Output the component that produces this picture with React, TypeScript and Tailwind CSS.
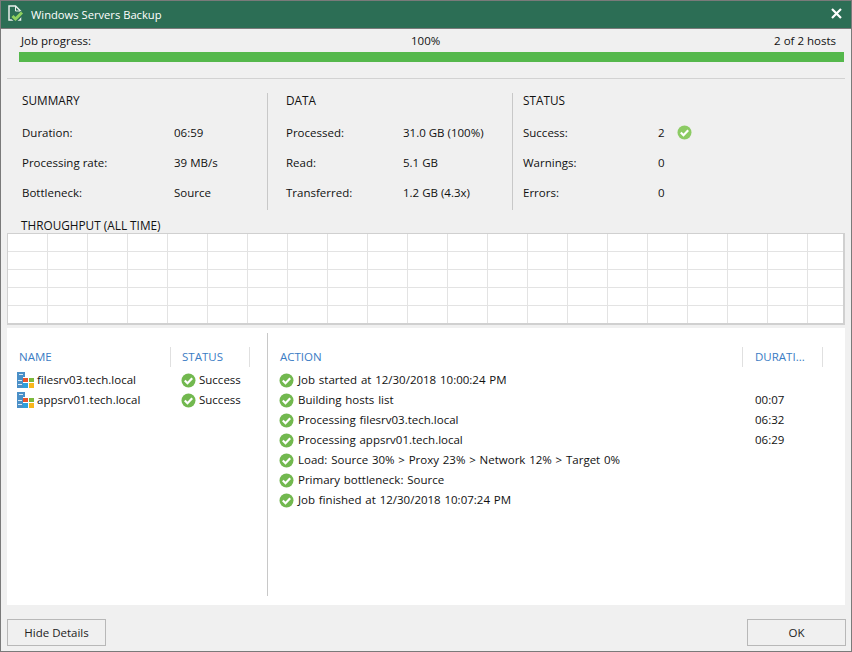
const font = "font-['Open_Sans','Liberation_Sans',sans-serif]"

function CheckIcon({ light }: { light?: boolean }) {
  return (
    <svg width="15" height="15" viewBox="0 0 15 15" className="shrink-0">
      <circle cx="7.5" cy="7.5" r="7" fill={light ? "#8ccb64" : "#72b84f"} />
      <path d="M3.8 7.4 6.5 10.2 11.2 5.3" fill="none" stroke="#fff" strokeWidth="2.2" />
    </svg>
  )
}

function ServerIcon() {
  return (
    <svg width="17" height="17" viewBox="0 0 17 17" className="shrink-0">
      <path d="M0 0H8V5H6V16H0Z" fill="#4a8fc7" />
      <rect x="2" y="2" width="4" height="1" fill="#d6e8f5" />
      <rect x="1" y="8" width="4" height="1" fill="#d6e8f5" />
      <rect x="1" y="12" width="4" height="1" fill="#d6e8f5" />
      <rect x="6" y="6" width="5" height="4" fill="#e8532b" />
      <rect x="12" y="6" width="5" height="4" fill="#7cb93a" />
      <rect x="6" y="11" width="5" height="5" fill="#2d9fdc" />
      <rect x="12" y="11" width="5" height="5" fill="#f8b71c" />
    </svg>
  )
}

function StatRow({ label, value, valueLeft, children }: { label: string; value: string; valueLeft: string; children?: React.ReactNode }) {
  return (
    <div className="flex h-[30px] items-center">
      <div className={valueLeft}>{label}</div>
      <div>{value}</div>
      {children}
    </div>
  )
}

const actions = [
  ["Job started at 12/30/2018 10:00:24 PM", ""],
  ["Building hosts list", "00:07"],
  ["Processing filesrv03.tech.local", "06:32"],
  ["Processing appsrv01.tech.local", "06:29"],
  ["Load: Source 30% > Proxy 23% > Network 12% > Target 0%", ""],
  ["Primary bottleneck: Source", ""],
  ["Job finished at 12/30/2018 10:07:24 PM", ""],
]

const hosts = ["filesrv03.tech.local", "appsrv01.tech.local"]

export default function App() {
  return (
    <div className={`${font} flex h-[652px] w-[852px] flex-col border border-[#7a7a7a] bg-[#f0f0f0] text-[11.5px] leading-4 text-[#111]`}>
      <header className="flex h-[28px] shrink-0 items-center border-b border-[#7a7a7a] bg-[#2c6e55] pl-[7px] pr-[9px] text-white">
        <svg width="19" height="19" viewBox="0 0 19 19" className="shrink-0">
          <path d="M1 1H7.5L12.5 6V15H1Z" fill="none" stroke="#e8f0ec" strokeWidth="1.5" />
          <path d="M7.5 1V6H12.5" fill="none" stroke="#e8f0ec" strokeWidth="1" />
          <path d="M4 11 7.5 14.5 14.5 7.5" fill="none" stroke="#2c6e55" strokeWidth="5" />
          <path d="M4.5 11 7.5 14 14 7.5" fill="none" stroke="#8fd15f" strokeWidth="3" />
        </svg>
        <span className="ml-[4px] text-[11.2px]">Windows Servers Backup</span>
        <svg width="11" height="11" viewBox="0 0 11 11" className="mb-[2px] ml-auto">
          <path d="M1 1 10 10M10 1 1 10" stroke="#fff" strokeWidth="2.2" />
        </svg>
      </header>

      <section className="shrink-0 pr-[7px] pl-[18px] pt-[4px]">
        <div className="flex h-4 items-center pr-[8px] pl-[2px]">
          <span className="w-[390px]">Job progress:</span>
          <span>100%</span>
          <span className="ml-auto">2 of 2 hosts</span>
        </div>
        <div className="mt-[3px] h-[10px] bg-[#55b84c]" />
      </section>

      <div className="mx-[6px] mt-[16px] h-px shrink-0 bg-[#d2d2d2]" />

      <section className="mt-[14px] ml-[6px] flex h-[117px] shrink-0">
        <div className="w-[261px] border-r border-[#c8c8c8] pl-[15px]">
          <div className="mb-[9px] h-[16px] text-[11.8px] leading-[14px]">SUMMARY</div>
          <StatRow label="Duration:" value="06:59" valueLeft="w-[152px]" />
          <StatRow label="Processing rate:" value="39 MB/s" valueLeft="w-[152px]" />
          <StatRow label="Bottleneck:" value="Source" valueLeft="w-[152px]" />
        </div>
        <div className="w-[245px] border-r border-[#c8c8c8] pl-[18px]">
          <div className="mb-[9px] h-[16px] text-[11.8px] leading-[14px]">DATA</div>
          <StatRow label="Processed:" value="31.0 GB (100%)" valueLeft="w-[117px]" />
          <StatRow label="Read:" value="5.1 GB" valueLeft="w-[117px]" />
          <StatRow label="Transferred:" value="1.2 GB (4.3x)" valueLeft="w-[117px]" />
        </div>
        <div className="pl-[10px]">
          <div className="mb-[9px] h-[16px] text-[11.8px] leading-[14px]">STATUS</div>
          <StatRow label="Success:" value="2" valueLeft="w-[135px]">
            <span className="mb-[2px] ml-3"><CheckIcon light /></span>
          </StatRow>
          <StatRow label="Warnings:" value="0" valueLeft="w-[135px]" />
          <StatRow label="Errors:" value="0" valueLeft="w-[135px]" />
        </div>
      </section>

      <div className="mt-[8px] ml-[20px] h-[15px] shrink-0 text-[11.8px] leading-[15px]">THROUGHPUT (ALL TIME)</div>

      <div className="mx-[6px] h-[92px] w-[838px] shrink-0 border-2 border-t border-l border-[#d0d0d0] bg-white bg-[linear-gradient(to_right,#e3e3e3_1px,transparent_1px),linear-gradient(to_bottom,#e3e3e3_1px,transparent_1px)] bg-[size:40px_18px] bg-[position:39px_17px]" />

      <section className="mx-[6px] mt-[3px] flex h-[277px] w-[838px] shrink-0 bg-white pt-[5px] pb-[9px]">
        <div className="w-[260px] shrink-0 pt-[14px]">
          <div className="flex h-[20px] items-center text-[#3a7cc4]">
            <div className="w-[163px] pl-3">NAME</div>
            <div className="h-full w-[80px] border-x border-[#e0e0e0] pl-[11px] leading-5">STATUS</div>
          </div>
          <div className="mt-[3px]">
            {hosts.map((h) => (
              <div key={h} className="flex h-5 items-center">
                <div className="flex w-[164px] items-center gap-[3px] pl-[10px]">
                  <ServerIcon />
                  <span>{h}</span>
                </div>
                <div className="flex items-center gap-[3px] pl-[10px]">
                  <CheckIcon />
                  <span>Success</span>
                </div>
              </div>
            ))}
          </div>
        </div>
        <div className="flex-1 border-l border-[#c8c8c8] pt-[14px]">
          <div className="flex h-[20px] items-center text-[#3a7cc4]">
            <div className="w-[474px] pl-3">ACTION</div>
            <div className="h-full w-[81px] truncate border-x border-[#e0e0e0] pl-[12px] leading-5">DURATI...</div>
          </div>
          <div className="mt-[3px] [word-spacing:0.8px]">
            {actions.map(([text, time]) => (
              <div key={text} className="flex h-5 items-center">
                <div className="flex w-[487px] items-center gap-[4px] pl-[11px]">
                  <CheckIcon />
                  <span>{text}</span>
                </div>
                <span>{time}</span>
              </div>
            ))}
          </div>
        </div>
      </section>

      <footer className="flex flex-1 items-end justify-between pr-[5px] pb-[5px] pl-[6px]">
        <button className="h-[27px] w-[99px] border border-[#b8b8b8] bg-[#f0f0f0] text-[#222]">Hide Details</button>
        <button className="h-[27px] w-[99px] border border-[#b8b8b8] bg-[#f0f0f0] text-[#222]">OK</button>
      </footer>
    </div>
  )
}
